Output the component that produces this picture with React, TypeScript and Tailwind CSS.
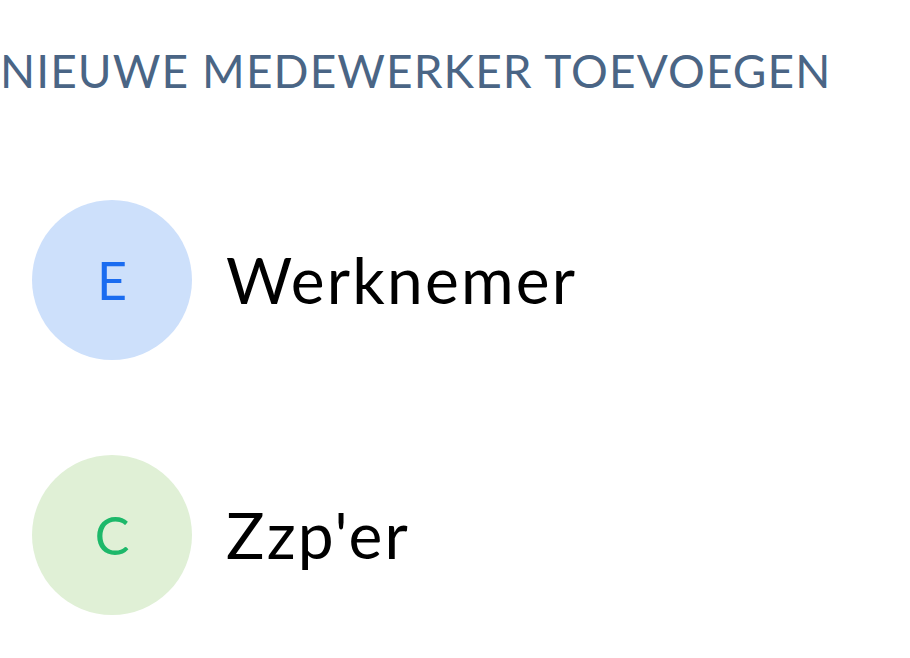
import React from 'react';

const options = [
  { letter: 'E', label: 'Werknemer', circle: 'bg-[#cde0fb]', text: 'text-[#1a6cf0]' },
  { letter: 'C', label: "Zzp'er", circle: 'bg-[#e0f0d6]', text: 'text-[#1db86a]' },
];

export default function App() {
  return (
    <div className="min-h-screen bg-white font-['Lato',sans-serif]">
      <h1 className="pt-[44px] text-[46px] leading-[54px] font-normal tracking-[1.1px] text-[#4a6585] whitespace-nowrap">
        NIEUWE MEDEWERKER TOEVOEGEN
      </h1>

      <div className="mt-[102px] flex flex-col gap-[95px] pl-[32px]">
        {options.map(option => (
          <button key={option.label} className="flex items-center gap-[34px] text-left">
            <span
              className={`flex h-[160px] w-[160px] items-center justify-center rounded-full ${option.circle}`}
            >
              <span className={`text-[52px] leading-none ${option.text}`}>{option.letter}</span>
            </span>
            <span className="text-[64px] leading-none tracking-[2.2px] text-black">{option.label}</span>
          </button>
        ))}
      </div>
    </div>
  );
}
